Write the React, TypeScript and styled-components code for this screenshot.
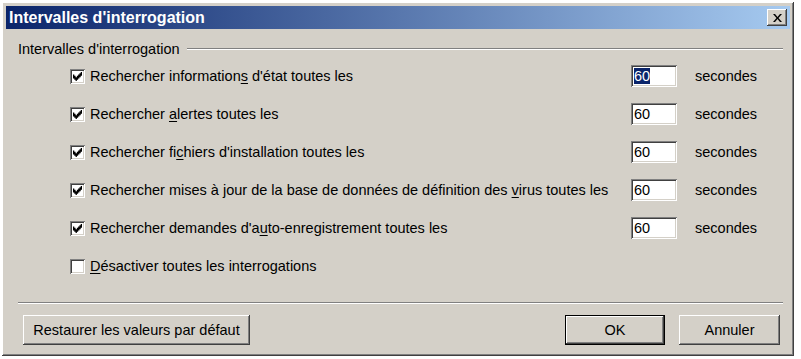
import React from 'react'
import styled, { createGlobalStyle, css } from 'styled-components'

const GlobalStyle = createGlobalStyle`
  html, body {
    margin: 0;
    padding: 0;
    background: #ffffff;
  }
  body {
    font-family: "Liberation Sans", Arial, sans-serif;
    font-size: 14.5px;
    color: #000;
  }
`;

const raised = css`
  box-shadow:
    inset -1px -1px #404040,
    inset 1px 1px #ffffff,
    inset -2px -2px #808080,
    inset 2px 2px #d4d0c8;
`;

const sunken = css`
  box-shadow:
    inset 1px 1px #808080,
    inset -1px -1px #ffffff,
    inset 2px 2px #404040,
    inset -2px -2px #d4d0c8;
`;

type Row = { label: string; key: number; value?: string; checked: boolean; selected?: boolean };

const rows: Row[] = [
  { label: "Rechercher informations d'état toutes les", key: 22, value: '60', checked: true, selected: true },
  { label: 'Rechercher alertes toutes les', key: 11, value: '60', checked: true },
  { label: "Rechercher fichiers d'installation toutes les", key: 13, value: '60', checked: true },
  { label: 'Rechercher mises à jour de la base de données de définition des virus toutes les', key: 64, value: '60', checked: true },
  { label: "Rechercher demandes d'auto-enregistrement toutes les", key: 23, value: '60', checked: true },
  { label: 'Désactiver toutes les interrogations', key: 0, checked: false },
];

function AccessLabel({ text, at }: { text: string; at: number }) {
  return (
    <Label>
      {text.slice(0, at)}
      <u>{text[at]}</u>
      {text.slice(at + 1)}
    </Label>
  );
}

export default function App() {
  return (
    <>
      <GlobalStyle />
      <Window>
        <TitleBar>
          <Title>Intervalles d'interrogation</Title>
          <CloseButton>
            <svg width="9" height="8" viewBox="0 0 9 8">
              <path d="M0 0h2l2.5 3 2.5-3h2L5.5 4 9 8H7L4.5 5 2 8H0l3.5-4z" fill="#000" />
            </svg>
          </CloseButton>
        </TitleBar>
        <Content>
          <GroupHeader>
            <span>Intervalles d'interrogation</span>
            <Rule />
          </GroupHeader>
          <Grid>
            {rows.map((r) => (
              <React.Fragment key={r.label}>
                <CheckCell>
                  <Box>
                    {r.checked && (
                      <svg width="9" height="9" viewBox="0 0 7 7">
                        <path d="M0 2h1v1h1v1h1V3h1V2h1V1h1V0h1v3H6v1H5v1H4v1H3v1H2V6H1V5H0z" fill="#000" />
                      </svg>
                    )}
                  </Box>
                  <AccessLabel text={r.label} at={r.key} />
                </CheckCell>
                {r.value ? (
                  <>
                    <Field>
                      {r.selected ? <Selected>{r.value}</Selected> : r.value}
                    </Field>
                    <Unit>secondes</Unit>
                  </>
                ) : (
                  <>
                    <span />
                    <span />
                  </>
                )}
              </React.Fragment>
            ))}
          </Grid>
        </Content>
        <Separator />
        <Buttons>
          <Button $width={227}>Restaurer les valeurs par défaut</Button>
          <Spacer />
          <Button $width={100} $default>OK</Button>
          <Button $width={101}>Annuler</Button>
        </Buttons>
      </Window>
    </>
  );
}

const Window = styled.div`
  margin: 2px 0 0 2px;
  width: 792px;
  height: 354px;
  box-sizing: border-box;
  background: #d4d0c8;
  padding: 4px;
  display: flex;
  flex-direction: column;
  ${raised};
`;

const TitleBar = styled.div`
  height: 23px;
  display: flex;
  align-items: center;
  justify-content: space-between;
  padding: 0 3px 0 3px;
  background: linear-gradient(to right, #0a246a, #a6caf0);
  color: #fff;
`;

const Title = styled.span`
  font-weight: bold;
  font-size: 16px;
`;

const CloseButton = styled.div`
  width: 20px;
  height: 17px;
  background: #d4d0c8;
  display: flex;
  align-items: center;
  justify-content: center;
  ${raised};
`;

const Content = styled.div`
  padding: 12px 7px 0 12px;
`;

const GroupHeader = styled.div`
  display: flex;
  align-items: center;
  gap: 7px;
  height: 16px;
`;

const Rule = styled.div`
  flex: 1;
  height: 0;
  border-top: 1px solid #808080;
  border-bottom: 1px solid #ffffff;
`;

const Grid = styled.div`
  margin: 0 0 0 52px;
  display: grid;
  grid-template-columns: 1fr 46px 106px;
  grid-auto-rows: 38px;
  align-items: center;
`;

const CheckCell = styled.div`
  display: flex;
  align-items: center;
  gap: 5px;
`;

const Box = styled.div`
  width: 15px;
  height: 15px;
  flex-shrink: 0;
  box-sizing: border-box;
  background: #fff;
  display: flex;
  align-items: center;
  justify-content: center;
  ${sunken};
`;

const Label = styled.span`
  white-space: nowrap;
  u {
    text-decoration-thickness: 1px;
    text-underline-offset: 2px;
  }
`;

const Field = styled.div`
  height: 22px;
  box-sizing: border-box;
  background: #fff;
  padding: 0 3px;
  display: flex;
  align-items: center;
  ${sunken};
`;

const Selected = styled.span`
  background: #0a246a;
  color: #fff;
`;

const Unit = styled.span`
  padding-left: 18px;
`;

const Separator = styled.div`
  margin: 17px 7px 0 12px;
  border-top: 1px solid #808080;
  border-bottom: 1px solid #ffffff;
`;

const Buttons = styled.div`
  display: flex;
  gap: 14px;
  padding: 11px 10px 0 17px;
`;

const Spacer = styled.div`
  flex: 1;
`;

const Button = styled.div<{ $width: number; $default?: boolean }>`
  width: ${(p) => p.$width}px;
  height: 30px;
  box-sizing: border-box;
  display: flex;
  align-items: center;
  justify-content: center;
  background: #d4d0c8;
  ${raised};
  ${(p) =>
    p.$default &&
    css`
      box-shadow:
        inset 0 0 0 1px #000,
        inset -2px -2px #404040,
        inset 2px 2px #ffffff,
        inset -3px -3px #808080;
    `}
`;
